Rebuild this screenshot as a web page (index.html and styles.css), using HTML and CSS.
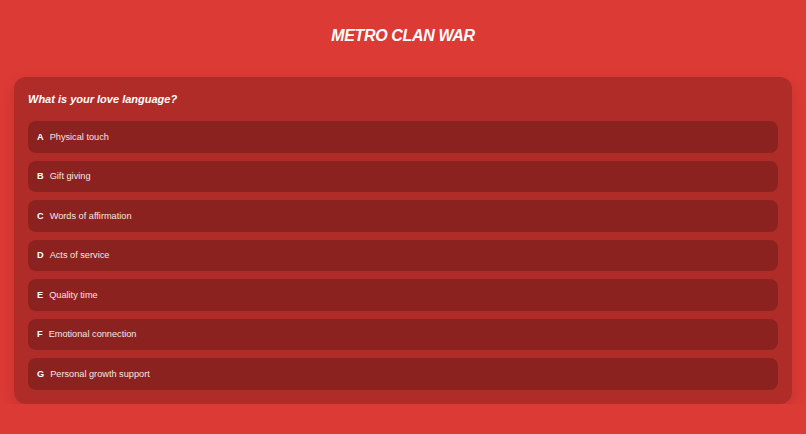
FILE: index.html
```html
<!DOCTYPE html>
<html lang="en">
<head>
    <meta charset="UTF-8">
    <meta name="viewport" content="width=device-width, initial-scale=1.0">
    <title>Metro Clan War</title>
    <link rel="stylesheet" href="styles.css">
</head>
<body>

    <!-- Header -->
    <h1 class="title">METRO CLAN WAR</h1>

    <!-- Question Card -->
    <div class="card">
        <h2 class="question">What is your love language?</h2>

        <div class="options">
            <div class="option"><span class="letter">A</span> Physical touch</div>
            <div class="option"><span class="letter">B</span> Gift giving</div>
            <div class="option"><span class="letter">C</span> Words of affirmation</div>
            <div class="option"><span class="letter">D</span> Acts of service</div>
            <div class="option"><span class="letter">E</span> Quality time</div>
            <div class="option"><span class="letter">F</span> Emotional connection</div>
            <div class="option"><span class="letter">G</span> Personal growth support</div>
        </div>
    </div>

</body>
</html>
```

FILE: styles.css
```css
/* General Reset */
* {
    margin: 0;
    padding: 0;
    box-sizing: border-box;
}

body {
    font-family: 'Liberation Sans', Arial, Helvetica, sans-serif;
    background-color: #dc3a35;
    color: #fff;
    padding: 26px 14px 0;
}

/* Title */
.title {
    text-align: center;
    font-size: 16px;
    font-weight: bold;
    font-style: italic;
    letter-spacing: -0.35px;
    line-height: 20px;
    margin-bottom: 31px;
}

/* Card */
.card {
    background-color: #b02c28;
    border-radius: 12px;
    padding: 14px;
    box-shadow: 0 6px 16px rgba(0, 0, 0, 0.12);
}

.question {
    font-size: 11px;
    font-weight: bold;
    font-style: italic;
    line-height: 16px;
    margin-bottom: 14px;
}

/* Options */
.options {
    display: flex;
    flex-direction: column;
    gap: 8px;
}

.option {
    background-color: #8b2220;
    border-radius: 8px;
    height: 31.5px;
    display: flex;
    align-items: center;
    padding: 0 9px;
    font-size: 9.2px;
    color: #f6e4e3;
    cursor: pointer;
}

.option:hover {
    background-color: #7e1f1d;
}

.letter {
    font-weight: bold;
    color: #fff;
    margin-right: 6px;
}
```
